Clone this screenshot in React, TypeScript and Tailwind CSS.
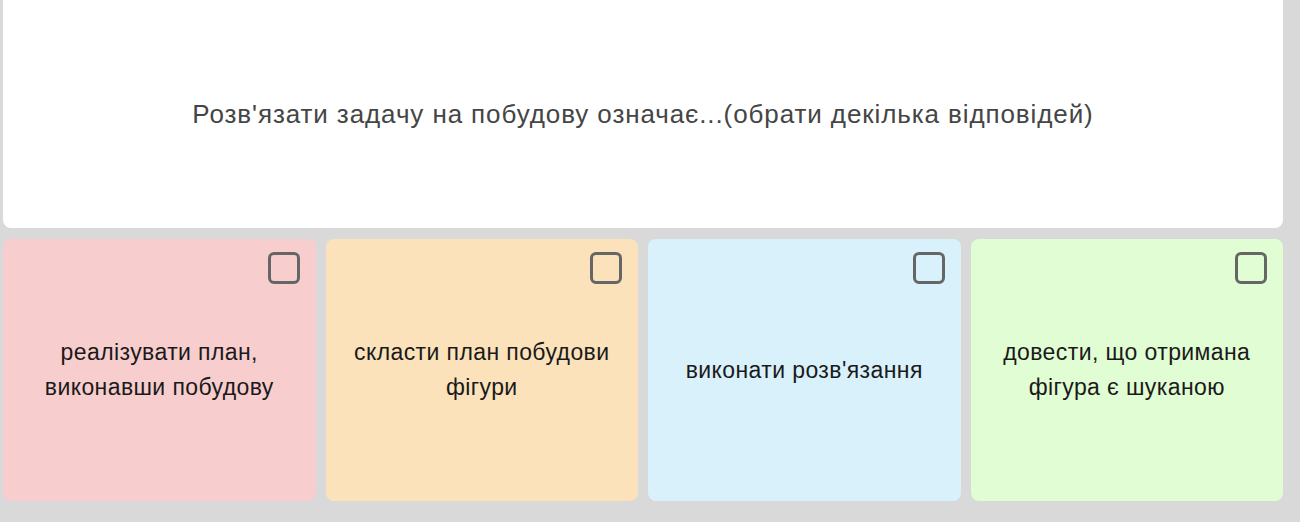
import React from "react";

const options = [
  { text: ["реалізувати план,", "виконавши побудову"], bg: "bg-[#f8cdce]" },
  { text: ["скласти план побудови", "фігури"], bg: "bg-[#fbe2bb]" },
  { text: ["виконати розв'язання"], bg: "bg-[#d9f1fb]" },
  { text: ["довести, що отримана", "фігура є шуканою"], bg: "bg-[#e1fdd3]" },
];

export default function App() {
  return (
    <div
      className="w-[1300px] h-[522px] bg-[#d9d9d9] overflow-hidden"
      style={{ fontFamily: '"Liberation Sans", Arial, sans-serif' }}
    >
      <div className="w-[1280px] ml-[3px] flex flex-col gap-[11px]">
        <div className="h-[228px] bg-white rounded-b-[8px] flex items-center justify-center">
          <p className="text-[26px] tracking-[0.9px] text-[#454545]">
            Розв'язати задачу на побудову означає...(обрати декілька відповідей)
          </p>
        </div>
        <div className="grid grid-cols-4 gap-[10px]">
          {options.map((o, i) => (
            <div
              key={i}
              className={`relative h-[262px] rounded-[8px] ${o.bg} flex items-center justify-center px-4`}
            >
              <div className="absolute top-[13px] right-[16px] w-[32px] h-[32px] rounded-[6px] border-[3px] border-[#666]" />
              <p className="text-[23px] tracking-[0.4px] leading-[35px] text-[#1a1a1a] text-center">
                {o.text.map((t, j) => (
                  <span key={j} className="block">
                    {t}
                  </span>
                ))}
              </p>
            </div>
          ))}
        </div>
      </div>
    </div>
  );
}
